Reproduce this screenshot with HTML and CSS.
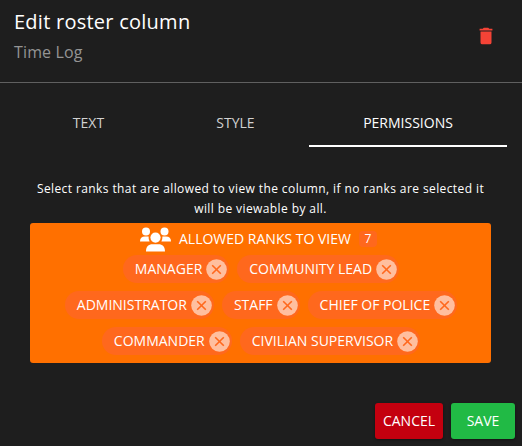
FILE: index.html
```html
<!DOCTYPE html>
<html lang="en">
<head>
<meta charset="utf-8">
<title>Edit roster column</title>
<link rel="stylesheet" href="styles.css">
</head>
<body>
<svg class="defs" width="0" height="0"><symbol id="close" viewBox="0 0 21 21"><circle cx="10.5" cy="10.5" r="10.3" fill="#ffbf9f"/><path d="M6.2 6.2l8.600 8.600M14.800 6.200l-8.600 8.600" stroke="#ff681d" stroke-width="1.6"/></symbol></svg>
<header class="header">
  <div>
    <h1 class="title">Edit roster column</h1>
    <p class="subtitle">Time Log</p>
  </div>
  <svg class="trash" viewBox="0 0 24 24"><path fill="#f44336" d="M19 4h-3.500l-1-1h-5l-1 1H5v2h14M6 19a2 2 0 0 0 2 2h8a2 2 0 0 0 2-2V7H6v12z"/></svg>
</header>
<nav class="tabs">
  <div class="tab">TEXT</div>
  <div class="tab">STYLE</div>
  <div class="tab active">PERMISSIONS</div>
</nav>
<p class="hint">Select ranks that are allowed to view the column, if no ranks are selected it<br>will be viewable by all.</p>
<section class="panel">
  <div class="panel-head">
    <svg class="users" viewBox="0 0 31 25"><g fill="#fff"><circle cx="6" cy="4.500" r="4"/><circle cx="24.500" cy="4.500" r="4"/><path d="M0 14.500q0-5 5-5h3.600q-.2 3 1 5zM31 14.500q0-5-5-5h-3.600q.2 3-1 5zM6 24.500c0-5 2.500-7.300 6.500-7.300h6c4 0 6.500 2.300 6.500 7.300z"/><circle cx="15.500" cy="10.600" r="5.100"/></g></svg>
    <span class="panel-title">ALLOWED RANKS TO VIEW</span>
    <span class="count">7</span>
  </div>
  <div class="chips">
    <div class="row">
      <span class="chip"><span>MANAGER</span><svg><use href="#close"/></svg></span>
      <span class="chip"><span>COMMUNITY LEAD</span><svg><use href="#close"/></svg></span>
    </div>
    <div class="row">
      <span class="chip"><span>ADMINISTRATOR</span><svg><use href="#close"/></svg></span>
      <span class="chip"><span>STAFF</span><svg><use href="#close"/></svg></span>
      <span class="chip"><span>CHIEF OF POLICE</span><svg><use href="#close"/></svg></span>
    </div>
    <div class="row">
      <span class="chip"><span>COMMANDER</span><svg><use href="#close"/></svg></span>
      <span class="chip"><span>CIVILIAN SUPERVISOR</span><svg><use href="#close"/></svg></span>
    </div>
  </div>
</section>
<footer class="actions">
  <button class="btn cancel">CANCEL</button>
  <button class="btn save">SAVE</button>
</footer>
</body>
</html>
```
FILE: styles.css
```css
* { box-sizing: border-box; }
body { margin: 0; width: 522px; height: 446px; overflow: hidden; background: #1e1e1e; color: #fff; font: 500 14px/20px "Open Sans", sans-serif; }
.defs { display: block; height: 0; }
.header { height: 83px; padding: 6px 25px 0 14px; border-bottom: 1px solid #606060; display: flex; justify-content: space-between; }
.title { margin: 0; font-size: 20px; line-height: 32px; font-weight: 500; letter-spacing: .25px; }
.subtitle { margin: 0; font-size: 16px; line-height: 28px; font-weight: 400; color: #949494; letter-spacing: .15px; }
.trash { width: 22px; height: 24px; margin-top: 18px; }
.tabs { display: grid; grid-template-columns: 147px 147px 198px; margin: 16px 0 0 15px; }
.tab { height: 48px; line-height: 48px; text-align: center; color: #d2d2d2; }
.tab.active { color: #fff; border-bottom: 2px solid #fff; }
.hint { margin: 32px 0 4px; padding-right: 1px; text-align: center; font-size: 12px; letter-spacing: .4px; white-space: nowrap; }
.panel { width: 461px; height: 140px; margin-left: 30px; border-radius: 3px; background: #ff7000; }
.panel-head { height: 32px; display: flex; align-items: center; justify-content: center; padding-right: 4px; }
.users { width: 31px; height: 25px; }
.panel-title { margin-left: 8px; }
.count { width: 18px; height: 16px; margin-left: 8px; border-radius: 4px; background: #ff681d; font-size: 12px; line-height: 16px; text-align: center; }
.chips { display: grid; gap: 8px; }
.row { display: flex; justify-content: center; gap: 8px; padding-left: 1px; }
.chip { height: 28px; padding: 0 2px 0 12px; border-radius: 14px; background: #ff681d; display: flex; align-items: center; gap: 4px; white-space: nowrap; }
.chip svg { width: 21px; height: 21px; }
.actions { display: flex; justify-content: flex-end; gap: 8px; margin: 40px 7px 0 0; }
.btn { height: 36px; padding: 0; border: 0; border-radius: 3px; color: #fff; font: 500 14px/36px "Open Sans", sans-serif; box-shadow: 0 1px 3px #0006; }
.cancel { width: 68px; background: #c4000f; }
.save { width: 64px; background: #21ba45; }
```
